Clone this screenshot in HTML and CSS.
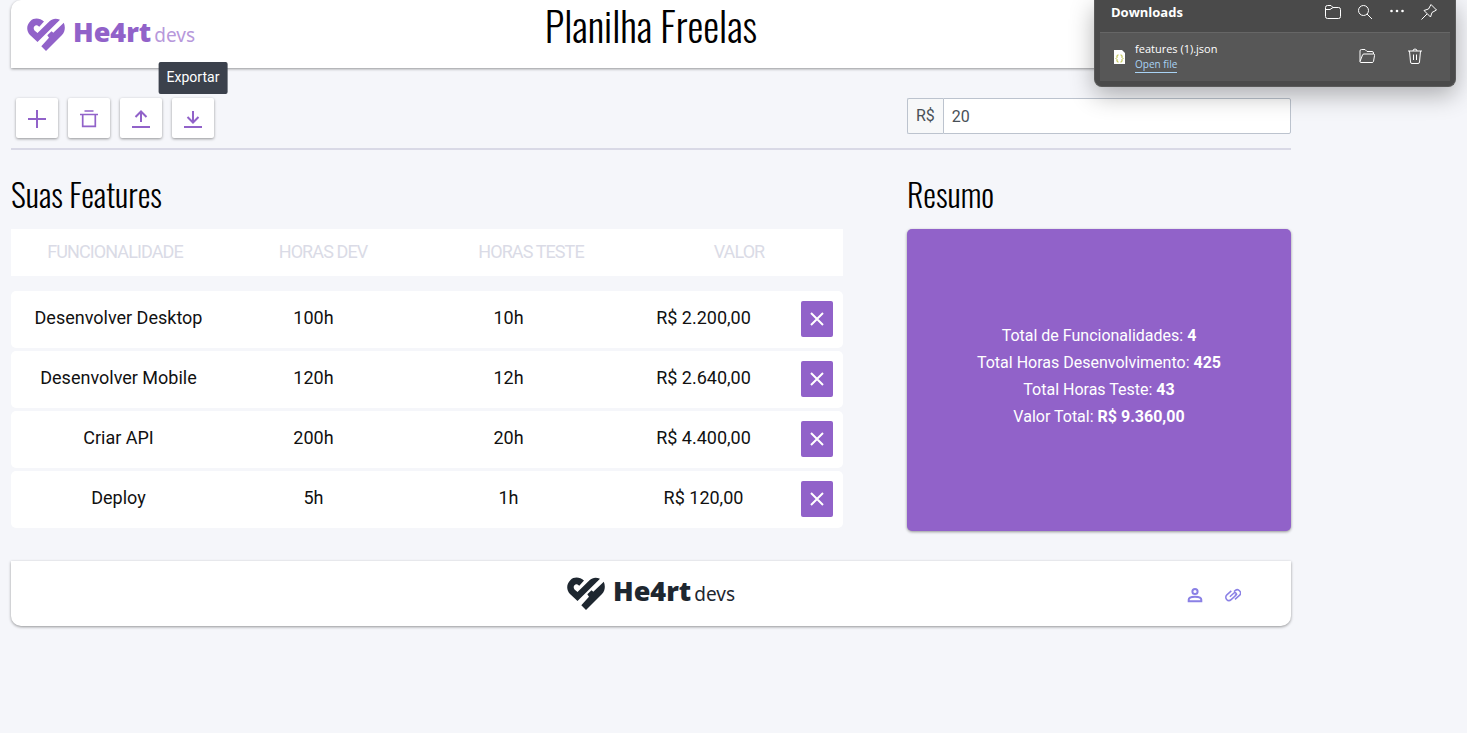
FILE: index.html
```
<!DOCTYPE html>
<html lang="pt-BR">
<head>
  <meta charset="UTF-8" />
  <meta name="viewport" content="width=device-width, initial-scale=1.0"/>
  <title>Planilha Freelas</title>
  <link rel="stylesheet" href="styles.css">
</head>
<body>

  <!-- shared icons -->
  <svg class="sprite" aria-hidden="true">
    <symbol id="heart" viewBox="0 0 38 33">
      <path d="M17 3.500C13 0 7 -0.500 3.500 3C-0.800 7 -0.800 13 3 17L10.500 24L33 1.800C29 0 25.500 0.500 22.500 3.300L10.500 15L7.500 12.500C5.500 10 7.500 6.500 10.500 7.500L12.300 8.700Z"/>
      <path d="M36.800 4.800L26.300 14.800L24.500 13.300L20.300 17.300L22 19.800L14.300 28.200L19 33L35 17C38 13.800 38.600 9 36.800 4.800Z"/>
    </symbol>
    <symbol id="close" viewBox="0 0 16 16">
      <path d="M2 2l12 12M14 2L2 14" fill="none" stroke="currentColor" stroke-width="2"/>
    </symbol>
  </svg>

  <div class="container">
    <header class="header">
      <a class="logo" href="#" aria-label="He4rt devs">
        <svg class="logo-heart"><use href="#heart"/></svg>
        <span class="logo-text">He4rt<span class="logo-devs">devs</span></span>
      </a>
      <h1>Planilha Freelas</h1>
    </header>

    <div class="toolbar">
      <div class="actions">
        <button class="action" type="button" aria-label="Adicionar">
          <svg viewBox="0 0 20 20"><path d="M10 1v18M1 10h18"/></svg>
        </button>
        <button class="action" type="button" aria-label="Limpar">
          <svg class="thin" viewBox="0 0 20 20"><path d="M1 5.500h18M5.500 2h9M3.700 5.500V17.300h12.600V5.500"/></svg>
        </button>
        <button class="action" type="button" aria-label="Importar">
          <svg viewBox="0 0 20 20"><path d="M1 18h18M10 13V3M4.500 8L10 2.500L15.500 8"/></svg>
        </button>
        <button class="action" type="button" aria-label="Exportar">
          <svg viewBox="0 0 20 20"><path d="M1 18h18M10 2v11M4.500 8L10 13.500L15.500 8"/></svg>
          <span class="tooltip">Exportar</span>
        </button>
      </div>
      <div class="rate">
        <label for="rate">R$</label>
        <input type="text" id="rate" value="20">
      </div>
    </div>

    <main class="content">
      <section class="features">
        <h2>Suas Features</h2>
        <table>
          <thead>
            <tr>
              <th>Funcionalidade</th>
              <th>Horas Dev</th>
              <th>Horas Teste</th>
              <th>Valor</th>
            </tr>
          </thead>
          <tbody>
            <tr>
              <td>Desenvolver Desktop</td><td>100h</td><td>10h</td><td>R$ 2.200,00</td>
              <td class="cell-remove"><button class="remove" type="button" aria-label="Remover"><svg><use href="#close"/></svg></button></td>
            </tr>
            <tr>
              <td>Desenvolver Mobile</td><td>120h</td><td>12h</td><td>R$ 2.640,00</td>
              <td class="cell-remove"><button class="remove" type="button" aria-label="Remover"><svg><use href="#close"/></svg></button></td>
            </tr>
            <tr>
              <td>Criar API</td><td>200h</td><td>20h</td><td>R$ 4.400,00</td>
              <td class="cell-remove"><button class="remove" type="button" aria-label="Remover"><svg><use href="#close"/></svg></button></td>
            </tr>
            <tr>
              <td>Deploy</td><td>5h</td><td>1h</td><td>R$ 120,00</td>
              <td class="cell-remove"><button class="remove" type="button" aria-label="Remover"><svg><use href="#close"/></svg></button></td>
            </tr>
          </tbody>
        </table>
      </section>

      <section class="summary">
        <h2>Resumo</h2>
        <div class="summary-card">
          <p>Total de Funcionalidades: <strong>4</strong></p>
          <p>Total Horas Desenvolvimento: <strong>425</strong></p>
          <p>Total Horas Teste: <strong>43</strong></p>
          <p>Valor Total: <strong>R$ 9.360,00</strong></p>
        </div>
      </section>
    </main>

    <footer class="footer">
      <a class="logo logo-dark" href="#" aria-label="He4rt devs">
        <svg class="logo-heart"><use href="#heart"/></svg>
        <span class="logo-text">He4rt<span class="logo-devs">devs</span></span>
      </a>
      <nav class="links">
        <a href="#" aria-label="Perfil">
          <svg viewBox="0 0 16 16"><circle cx="8" cy="4.500" r="2.600"/><path d="M1.700 14.200v-1.500c0-2 3-3 6.300-3s6.300 1 6.300 3v1.500z"/></svg>
        </a>
        <a href="#" aria-label="Link">
          <svg class="clip" viewBox="0 0 16 16"><g transform="rotate(-42 8 8)"><path d="M9.500 3.800H3.500a3.200 3.200 0 0 0 0 6.400H10a1.500 1.500 0 0 0 0-3H4.500M6.500 12.600h6a3.200 3.200 0 0 0 0-6.400H11M12 9.700H9"/></g></svg>
        </a>
      </nav>
    </footer>
  </div>

  <!-- downloads panel -->
  <aside class="downloads">
    <div class="downloads-head">
      <strong>Downloads</strong>
      <button type="button" aria-label="Open folder">
        <svg viewBox="0 0 18 18"><path d="M1.500 4.500a2 2 0 0 1 2-2H7l2 2h5.500a2 2 0 0 1 2 2v7a2 2 0 0 1-2 2h-11a2 2 0 0 1-2-2zM1.500 6.500H6L9 4.500"/></svg>
      </button>
      <button type="button" aria-label="Search">
        <svg viewBox="0 0 18 18"><circle cx="7.500" cy="7.500" r="5"/><path d="M11 11l5 5"/></svg>
      </button>
      <button type="button" aria-label="More">
        <svg viewBox="0 0 18 18"><g class="dots"><circle cx="3.500" cy="8" r="1.300"/><circle cx="9" cy="8" r="1.300"/><circle cx="14.500" cy="8" r="1.300"/></g></svg>
      </button>
      <button type="button" aria-label="Pin">
        <svg viewBox="0 0 18 18"><path d="M11 1.500L16.500 7L12 9.500L10.500 14L4 7.500L8.500 6zM7 11L1.500 16.500"/></svg>
      </button>
    </div>
    <div class="downloads-item">
      <svg class="file" viewBox="0 0 11 14"><path class="page" d="M0 0h8l3 3v11H0z"/><path class="braces" d="M4.500 5H4q-1 0-1 1v1.500L2 8.500l1 1V11q0 1 1 1h.5M6.500 5H7q1 0 1 1v1.500l1 1-1 1V11q0 1-1 1h-.5"/></svg>
      <div class="file-info">
        <span>features (1).json</span>
        <a href="#">Open file</a>
      </div>
      <button type="button" aria-label="Show in folder">
        <svg viewBox="0 0 18 18"><path d="M2 13.500V3a1.500 1.500 0 0 1 1.500-1.500H7l2 2h5A1.500 1.500 0 0 1 15.500 5v1M2 13.500L4.500 7a1.500 1.500 0 0 1 1.500-1h9.500a1.200 1.200 0 0 1 1 1.600l-1 5.900a1.500 1.500 0 0 1-1.500 1H3a1 1 0 0 1-1-1z"/></svg>
      </button>
      <button type="button" aria-label="Delete">
        <svg viewBox="0 0 18 18"><path d="M2 3h14M7 3a2 2 0 0 1 4 0M3.500 3l1 11a1.500 1.500 0 0 0 1.500 1.500h6a1.500 1.500 0 0 0 1.500-1.500l1-11M7.500 6.500v5.500M10.500 6.500v5.500"/></svg>
      </button>
    </div>
  </aside>

</body>
</html>
```

FILE: styles.css
```
* {
  box-sizing: border-box;
}
body {
  font-family: Roboto, sans-serif;
  font-size: 16px;
  background-color: #f5f6fa;
  color: #212529;
  margin: 0;
  min-height: 100vh;
}
h1,
h2 {
  font-family: Oswald, "Liberation Sans Narrow", sans-serif;
  font-weight: 300;
  color: #000;
  margin: 0;
}
h1 {
  font-size: 40px;
  line-height: 50px;
  text-align: center;
}
h2 {
  font-size: 32px;
  line-height: 42px;
  margin-bottom: 14px;
}
button {
  font-family: inherit;
  cursor: pointer;
}
.sprite {
  display: none;
}
.container {
  max-width: 1280px;
  margin-left: 11px;
}

/* header and footer */
.header,
.footer {
  display: grid;
  grid-template-columns: 1fr auto 1fr;
  background-color: #fff;
  padding: 0 16px;
  box-shadow: 0 1px 3px rgba(0, 0, 0, 0.4);
}
.header {
  height: 68px;
  border-radius: 10px 10px 0 0;
}
.footer {
  align-items: center;
  height: 65px;
  margin-top: 30px;
  border-radius: 0 0 10px 10px;
}
.logo {
  display: flex;
  align-items: center;
  color: #9162c9;
  text-decoration: none;
  font-family: "Noto Sans", sans-serif;
}
.logo-heart {
  width: 38px;
  height: 33px;
  margin-right: 8px;
  fill: currentColor;
}
.logo-text {
  font-size: 27px;
  font-weight: 900;
  line-height: 32px;
  padding-bottom: 2px;
}
.logo-devs {
  font-size: 19px;
  font-weight: 400;
  margin-left: 3px;
  opacity: 0.65;
}
.logo-dark {
  grid-column: 2;
  color: #1e2730;
}
.logo-dark .logo-devs {
  opacity: 1;
}
.links {
  display: flex;
  justify-content: flex-end;
  gap: 22px;
  padding: 2px 34px 0 0;
}
.links svg {
  display: block;
  width: 16px;
  height: 16px;
  fill: none;
  stroke: #8a80e5;
  stroke-width: 2;
}
.links .clip {
  stroke-width: 1.5;
}

/* toolbar */
.toolbar {
  display: flex;
  justify-content: space-between;
  height: 82px;
  padding-top: 30px;
  border-bottom: 2px solid #d9d9e6;
}
.actions {
  display: flex;
  gap: 10px;
  padding-left: 5px;
}
.action {
  position: relative;
  width: 42px;
  height: 40px;
  padding: 0;
  background-color: #fff;
  border: none;
  border-radius: 2px;
  box-shadow: 0 1px 3px rgba(0, 0, 0, 0.4);
}
.action svg {
  display: block;
  width: 20px;
  height: 20px;
  margin: 2px auto 0;
  fill: none;
  stroke: #9162c9;
  stroke-width: 2;
}
.action .thin {
  stroke-width: 1.7;
}
.tooltip {
  position: absolute;
  bottom: 44px;
  left: 50%;
  transform: translateX(-50%);
  padding: 0 8px 2px;
  font-size: 14px;
  line-height: 30px;
  color: #fff;
  background-color: #3b414c;
  border-radius: 2px;
}
.rate {
  display: flex;
  width: 30%;
  height: 36px;
  color: #495057;
}
.rate label {
  padding: 0 8px;
  line-height: 34px;
  background-color: #f7f8f9;
  border: 1px solid #bcc3ce;
  border-right: none;
  border-radius: 2px 0 0 2px;
}
.rate input {
  flex: 1;
  min-width: 0;
  padding: 0 8px;
  font: inherit;
  color: inherit;
  border: 1px solid #bcc3ce;
  border-radius: 0 2px 2px 0;
}

/* features and summary */
.content {
  display: flex;
  justify-content: space-between;
  padding-top: 23px;
}
.features {
  width: 65%;
}
.summary {
  display: flex;
  flex-direction: column;
  width: 30%;
}
table,
thead,
tbody {
  display: block;
}
table {
  padding-bottom: 3px;
  text-align: center;
  font-size: 18px;
}
tr {
  display: flex;
  align-items: center;
  background-color: #fff;
}
th,
td {
  flex: 1;
  padding: 0;
}
thead tr {
  height: 47px;
  margin-bottom: 15px;
  padding-bottom: 2px;
}
th {
  color: #dadbe6;
  font-weight: 400;
  letter-spacing: -0.05em;
  text-transform: uppercase;
}
tbody tr {
  height: 57px;
  padding: 0 10px 1px;
  border-radius: 5px;
}
tbody tr + tr {
  margin-top: 3px;
}
td {
  padding-bottom: 2px;
  line-height: 22px;
  color: #111;
}
.cell-remove {
  flex: none;
  padding: 0;
}
.remove {
  display: block;
  width: 32px;
  height: 36px;
  padding: 0;
  color: #fff;
  background-color: #9162c9;
  border: none;
  border-radius: 2px;
}
.remove svg {
  display: block;
  width: 16px;
  height: 16px;
  margin: auto;
}
.summary-card {
  flex: 1;
  display: flex;
  flex-direction: column;
  justify-content: center;
  padding-bottom: 8px;
  text-align: center;
  color: #fff;
  background-color: #9162c9;
  border-radius: 5px;
  box-shadow: 0 1px 3px rgba(0, 0, 0, 0.4);
}
.summary-card p {
  margin: 0;
  line-height: 27px;
}

/* downloads panel */
.downloads {
  position: absolute;
  top: 0;
  right: 11px;
  width: 362px;
  padding: 0 5px 5px;
  font-family: "Open Sans", sans-serif;
  font-size: 11px;
  color: #fff;
  background-color: #4a4a4a;
  border: 1px solid #5a5a5a;
  border-top: none;
  border-radius: 0 0 8px 8px;
  box-shadow: 0 8px 24px rgba(0, 0, 0, 0.3);
}
.downloads button {
  padding: 0;
  background: none;
  border: none;
}
.downloads svg {
  display: block;
  width: 18px;
  height: 18px;
  fill: none;
  stroke: #fff;
}
.downloads-head {
  display: flex;
  align-items: center;
  gap: 14px;
  height: 32px;
  padding: 0 12px 8px 11px;
  font-size: 13px;
}
.downloads-head strong {
  flex: 1;
}
.downloads .dots {
  fill: #fff;
  stroke: none;
}
.downloads-item {
  display: flex;
  align-items: center;
  height: 49px;
  padding: 0 26px 0 14px;
  background-color: #575757;
  border-top: 1px solid #666;
}
.downloads-item button + button {
  margin-left: 30px;
}
.downloads .file {
  width: 11px;
  height: 14px;
  margin-right: 10px;
  stroke: none;
}
.page {
  fill: #fff;
}
.downloads .braces {
  stroke: #b5b830;
}
.file-info {
  flex: 1;
  display: flex;
  flex-direction: column;
  align-items: flex-start;
}
.file-info a {
  margin-top: 1px;
  font-size: 10px;
  line-height: 15px;
  color: #a9d3f5;
  text-decoration: none;
  border-bottom: 1px solid #a9d3f5;
}
```
